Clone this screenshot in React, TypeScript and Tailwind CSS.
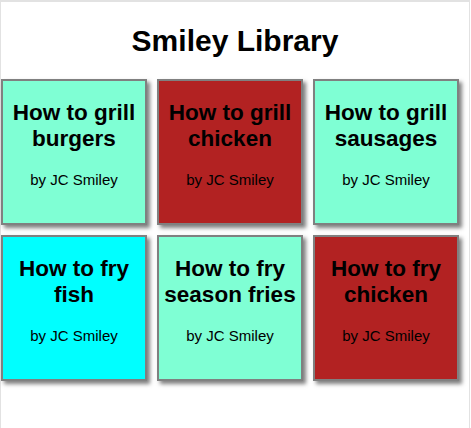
import React from "react";

const cards = [
  { title: "How to grill burgers", bg: "bg-[#7fffd4]" },
  { title: "How to grill chicken", bg: "bg-[#b22222]" },
  { title: "How to grill sausages", bg: "bg-[#7fffd4]" },
  { title: "How to fry fish", bg: "bg-[#00ffff]" },
  { title: "How to fry season fries", bg: "bg-[#7fffd4]" },
  { title: "How to fry chicken", bg: "bg-[#b22222]" },
];

export default function App() {
  return (
    <div
      className="w-[470px] min-h-[428px] bg-white border-t-2 border-l border-r border-[#e2e2e2] text-black"
      style={{ fontFamily: '"Liberation Sans", Arial, sans-serif' }}
    >
      <h1 className="pt-[21px] text-center text-[30px] leading-[36px] font-bold">Smiley Library</h1>
      <div className="mt-[20px] grid grid-cols-[146px_146px_146px] gap-[10px]">
        {cards.map((c) => (
          <div
            key={c.title}
            className={`${c.bg} h-[146px] border-2 border-[#808080] shadow-[3px_3px_4px_rgba(0,0,0,0.5)] flex flex-col items-center pt-[19px] text-center`}
          >
            <h2 className="text-[22.5px] leading-[26px] font-bold w-full">{c.title}</h2>
            <p className="mt-[19px] text-[15px] leading-[18px]">by JC Smiley</p>
          </div>
        ))}
      </div>
    </div>
  );
}
